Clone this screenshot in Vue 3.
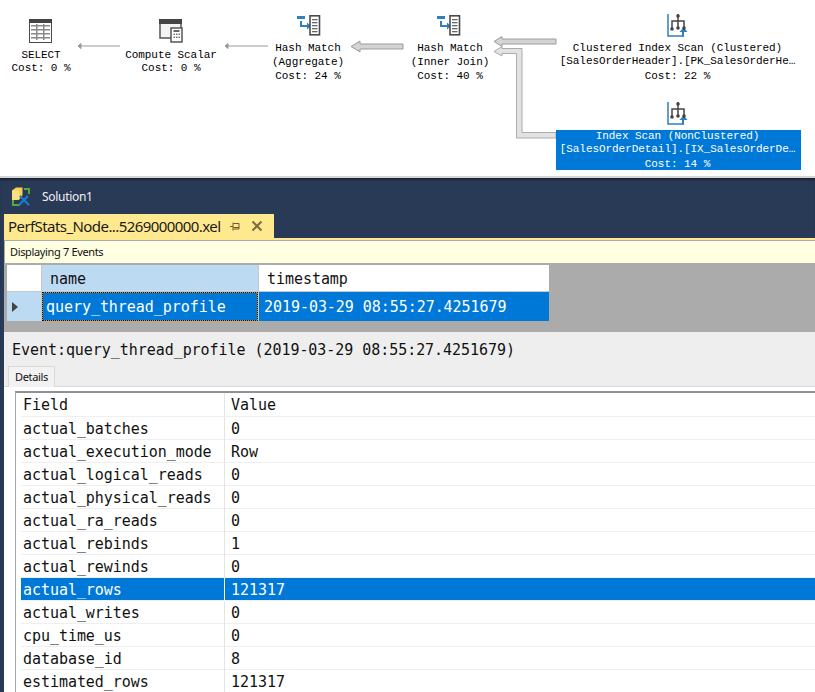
<script setup>
const nodes = [
  { id: 'select', x: 1, y: 49, w: 80, lines: ['SELECT', 'Cost: 0 %'], gaps: [13] },
  { id: 'compute', x: 111, y: 49, w: 120, lines: ['Compute Scalar', 'Cost: 0 %'], gaps: [13] },
  { id: 'agg', x: 258, y: 42, w: 100, lines: ['Hash Match', '(Aggregate)', 'Cost: 24 %'], gaps: [14, 14] },
  { id: 'join', x: 400, y: 42, w: 100, lines: ['Hash Match', '(Inner Join)', 'Cost: 40 %'], gaps: [14, 14] },
  { id: 'clustered', x: 555, y: 42, w: 245, lines: ['Clustered Index Scan (Clustered)', '[SalesOrderHeader].[PK_SalesOrderHe…', 'Cost: 22 %'], gaps: [13, 15] },
  { id: 'index', x: 556, y: 130, w: 245, sel: true, lines: ['Index Scan (NonClustered)', '[SalesOrderDetail].[IX_SalesOrderDe…', 'Cost: 14 %'], gaps: [13, 15] },
]
const rows = [
  ['actual_batches', '0'],
  ['actual_execution_mode', 'Row'],
  ['actual_logical_reads', '0'],
  ['actual_physical_reads', '0'],
  ['actual_ra_reads', '0'],
  ['actual_rebinds', '1'],
  ['actual_rewinds', '0'],
  ['actual_rows', '121317', true],
  ['actual_writes', '0'],
  ['cpu_time_us', '0'],
  ['database_id', '8'],
  ['estimated_rows', '121317'],
]
</script>

<template>
  <div class="page">
    <section class="plan">
      <svg class="links" width="815" height="176" viewBox="0 0 815 176">
        <g class="thin">
          <path d="M120 46H78" /><path d="M78 46l3-2.5v5z" />
          <path d="M268 46H225" /><path d="M225 46l3-2.5v5z" />
        </g>
        <path class="fat" d="M403 44H360V41L351 46.500L360 52V49H403Z" />
        <path class="fat" d="M556 39H502V36.500L494 41.500L502 46.500V44H556Z" />
        <path class="fat pale" d="M556 132.500H522V48.500H502V46.500L494 51.500L502 56V53.500H516.500V138H556Z" />

        <g transform="translate(29 19)">
          <rect x="0.500" y="0.500" width="22" height="23" fill="#fff" stroke="#4a4a4a" />
          <rect x="0" y="0" width="23" height="4" fill="#444" />
          <g fill="#8a8a8a">
            <rect x="2" y="6" width="19" height="1.500" /><rect x="2" y="10" width="19" height="1.500" />
            <rect x="2" y="14" width="19" height="1.500" /><rect x="2" y="18" width="19" height="1.500" />
            <rect x="7" y="5" width="1.500" height="16" /><rect x="14" y="5" width="1.500" height="16" />
          </g>
        </g>

        <g transform="translate(159 19)">
          <rect x="1" y="1" width="21" height="18" fill="#f4f4f4" stroke="#555" stroke-width="1.500" />
          <rect x="0" y="0" width="23" height="5" fill="#444" />
          <rect x="12" y="9" width="11" height="14" fill="#fff" stroke="#555" stroke-width="1.500" />
          <rect x="14.500" y="11" width="6" height="2" fill="#666" />
          <g fill="#777">
            <rect x="14.500" y="14.500" width="1.500" height="1.500" /><rect x="17" y="14.500" width="1.500" height="1.500" /><rect x="19.500" y="14.500" width="1.500" height="1.500" />
            <rect x="14.500" y="17.500" width="1.500" height="1.500" /><rect x="17" y="17.500" width="1.500" height="1.500" /><rect x="19.500" y="17.500" width="1.500" height="1.500" />
          </g>
        </g>

        <g v-for="x in [297, 437]" :key="x" :transform="`translate(${x} 15)`">
          <rect x="0" y="1" width="8" height="3" fill="#2f7fc4" />
          <path d="M4 6V11H11" fill="none" stroke="#2f7fc4" stroke-width="2" />
          <path d="M10 7.500L14 11L10 14.500Z" fill="#2f7fc4" />
          <rect x="13" y="0.800" width="9.500" height="19" fill="#fff" stroke="#4a4a4a" stroke-width="1.600" />
          <g fill="#666">
            <rect x="15" y="4" width="5.500" height="1.300" /><rect x="15" y="7" width="5.500" height="1.300" />
            <rect x="15" y="10" width="5.500" height="1.300" /><rect x="15" y="13" width="5.500" height="1.300" />
            <rect x="15" y="16" width="5.500" height="1.300" />
          </g>
        </g>

        <g v-for="y in [13, 101]" :key="y" :transform="`translate(667 ${y})`">
          <path d="M1 1V23H16M16 23H17" fill="none" stroke="#2f7fc4" stroke-width="1.500" />
          <path d="M16 23.500V18" fill="none" stroke="#2f7fc4" stroke-width="2" />
          <path d="M12.500 19L16.500 14.500L20.500 19Z" fill="#2f7fc4" />
          <path d="M11 1V10M5 17V8H17V17M11 8V15" fill="none" stroke="#444" stroke-width="1.500" />
          <circle cx="11" cy="3" r="1.800" fill="#444" /><circle cx="5" cy="16" r="1.800" fill="#444" />
          <circle cx="11" cy="15" r="1.800" fill="#444" /><circle cx="17" cy="15" r="1.800" fill="#444" />
        </g>
      </svg>

      <div
        v-for="n in nodes"
        :key="n.id"
        class="node"
        :class="{ selected: n.sel }"
        :style="{ left: n.x + 'px', top: n.y + 'px', width: n.w + 'px' }"
      >
        <div v-for="(l, i) in n.lines" :key="i" class="node-line" :style="{ height: (n.gaps[i] ?? 13) + 'px' }">{{ l }}</div>
      </div>
    </section>

    <section class="ide">
      <div class="titlebar">
        <svg width="20" height="20" viewBox="0 0 20 20">
          <path d="M1 6H3V17H9V19H1ZM13 1H19V7H17V3H13Z" fill="#5aa63c" />
          <path d="M1 3.500L5 0.500H11.500V8L8 13H3L1 11Z" fill="#f7cf58" />
          <path d="M1 3.500H8V12L3 13H1Z" fill="#fbe182" />
          <path d="M8 18L17 9M9 9L18 18" stroke="#1c7ad0" stroke-width="2.200" fill="none" />
        </svg>
        <span class="solution">Solution1</span>
      </div>

      <div class="tabstrip">
        <div class="doc-tab">
          <span class="doc-name">PerfStats_Node...5269000000.xel</span>
          <svg class="pin" width="10" height="9" viewBox="0 0 10 9">
            <path d="M0 4.500H3M3 0.500V8.500M3.500 1.500H9V7H3.500M3.500 5.500H9" fill="none" stroke="#6e5a2c" />
          </svg>
          <svg class="close" width="12" height="12" viewBox="0 0 12 12">
            <path d="M1.500 1.500L10.500 10.500M10.500 1.500L1.500 10.500" stroke="#7d6c40" stroke-width="2" />
          </svg>
        </div>
      </div>

      <div class="doc">
        <div class="info">Displaying 7 Events</div>

        <div class="events">
          <div class="events-grid">
            <div class="corner"></div>
            <div class="col col-active">name</div>
            <div class="col">timestamp</div>
            <div class="row-head"><i class="caret"></i></div>
            <div class="cell cell-focus">query_thread_profile</div>
            <div class="cell cell-time">2019-03-29 08:55:27.4251679</div>
          </div>
        </div>

        <div class="detail">
          <div class="event-title">Event:query_thread_profile (2019-03-29 08:55:27.4251679)</div>
          <div class="tabs">
            <div class="details-tab">Details</div>
          </div>
          <div class="panel">
            <div class="fields">
              <div class="field-row field-head">
                <div class="k">Field</div>
                <div class="v">Value</div>
              </div>
              <div v-for="r in rows" :key="r[0]" class="field-row" :class="{ active: r[2] }">
                <div class="k">{{ r[0] }}</div>
                <div class="v">{{ r[1] }}</div>
              </div>
            </div>
          </div>
        </div>
      </div>
    </section>
  </div>
</template>

<style scoped>
.page {
  width: 815px;
  height: 692px;
  overflow: hidden;
  display: flex;
  flex-direction: column;
  background: #fff;
}
.plan {
  position: relative;
  height: 176px;
  flex: none;
  background: #fff;
  font-family: "Liberation Mono", monospace;
  font-size: 11px;
  letter-spacing: -0.060px;
  color: #000;
}
.links {
  position: absolute;
  left: 0;
  top: 0;
}
.thin path {
  fill: #999;
  stroke: #999;
  stroke-width: 1;
}
.fat {
  fill: #d4d4d4;
  stroke: #9b9b9b;
  stroke-width: 1;
}
.pale {
  fill: #e2e2e2;
  stroke: #ababab;
}
.node {
  position: absolute;
  text-align: center;
  white-space: nowrap;
}
.node-line {
  line-height: 13px;
}
.selected {
  box-sizing: border-box;
  padding-right: 2px;
  background: #0078d7;
  color: #fff;
  height: 40px;
}
.ide {
  flex: 1;
  min-height: 0;
  display: flex;
  flex-direction: column;
  background: #293a56;
  box-shadow: inset 0 3px 2px -1px #1b2434;
  border-top: 2px solid #d6d6d6;
}
.titlebar {
  height: 36px;
  flex: none;
  display: flex;
  align-items: center;
  padding: 1px 0 0 11px;
  box-sizing: border-box;
  gap: 11px;
}
.solution {
  font-family: "Noto Sans", sans-serif;
  font-size: 12px;
  letter-spacing: -0.300px;
  color: #f1f1f1;
}
.tabstrip {
  height: 26px;
  flex: none;
  padding-left: 4px;
  display: flex;
}
.doc-tab {
  width: 270px;
  height: 24px;
  box-sizing: border-box;
  background: #ffe98e;
  display: flex;
  align-items: center;
  padding-left: 4px;
  color: #1b1b1b;
}
.doc-name {
  font-family: "Noto Sans", sans-serif;
  font-size: 15px;
  letter-spacing: -0.570px;
  width: 222px;
  white-space: nowrap;
}
.close {
  margin-left: 11px;
}
.doc {
  flex: 1;
  min-height: 0;
  margin-left: 4px;
  margin-top: -2px;
  display: flex;
  flex-direction: column;
  border-top: 2px solid #ffe98e;
  background: #eee;
}
.info {
  height: 23px;
  flex: none;
  box-sizing: border-box;
  padding-left: 5px;
  border-top: 1px solid #a9a9b4;
  border-left: 1px solid #a9a9b4;
  background: #ffffe1;
  font-family: "Noto Sans", sans-serif;
  font-size: 11px;
  line-height: 22px;
  letter-spacing: -0.350px;
  color: #111;
}
.events {
  height: 69px;
  flex: none;
  background: #ababab;
  padding: 2px 0 0 3px;
  box-sizing: border-box;
  font-family: "DejaVu Sans Mono", monospace;
  font-size: 15px;
  letter-spacing: -0.050px;
}
.events-grid {
  display: grid;
  grid-template-columns: 34px 216px 290px;
  grid-template-rows: 26px 29px;
  gap: 1px 1px;
  width: 542px;
  background: #c8c8c8;
}
.corner {
  background: #fff;
}
.col {
  background: #fff;
  padding: 1px 0 0 8px;
  line-height: 26px;
  height: 26px;
  box-sizing: border-box;
  color: #111;
}
.col-active {
  background: #bcdaf2;
}
.row-head {
  background: #bcdaf2;
  display: flex;
  align-items: center;
  padding-left: 5px;
}
.caret {
  width: 0;
  height: 0;
  border-left: 6px solid #444;
  border-top: 5px solid transparent;
  border-bottom: 5px solid transparent;
}
.cell {
  background: #0078d7;
  color: #fff;
  padding: 1px 0 0 4px;
  line-height: 28px;
  white-space: nowrap;
  box-sizing: border-box;
}
.cell-time {
  padding-left: 5px;
}
.cell-focus {
  box-shadow: inset 0 0 0 1px #e28b1e;
  outline: 1px dotted #111;
  outline-offset: -1px;
}
.detail {
  flex: 1;
  min-height: 0;
  display: flex;
  flex-direction: column;
  font-family: "DejaVu Sans Mono", monospace;
  font-size: 15px;
  letter-spacing: -0.050px;
}
.event-title {
  height: 34px;
  flex: none;
  box-sizing: border-box;
  padding: 8px 0 0 8px;
  line-height: 20px;
  color: #111;
}
.tabs {
  height: 20px;
  flex: none;
  padding-left: 4px;
  border-bottom: 1px solid #d9d9d9;
}
.details-tab {
  width: 47px;
  height: 21px;
  box-sizing: border-box;
  border: 1px solid #d9d9d9;
  border-bottom: none;
  background: #f2f2f2;
  font-family: "Noto Sans", sans-serif;
  font-size: 11px;
  line-height: 20px;
  letter-spacing: -0.350px;
  text-align: center;
  color: #111;
}
.panel {
  flex: 1;
  min-height: 0;
  padding: 4px 0 0 11px;
  background: #fff;
  overflow: hidden;
}
.fields {
  border-top: 2px solid #8f8f97;
  border-left: 1px solid #a8a8a8;
  padding-left: 5px;
}
.field-row {
  display: grid;
  grid-template-columns: 204px 1fr;
  height: 23px;
  line-height: 22px;
  box-sizing: border-box;
  border-bottom: 1px solid #efefef;
  color: #111;
}
.field-head {
  height: 24px;
  line-height: 22px;
}
.k {
  padding: 1px 0 0 2px;
  border-right: 1px solid #e4e4e4;
}
.v {
  padding: 1px 0 0 6px;
}
.active {
  background: #0078d7;
  color: #fff;
}
.active .k {
  border-right-color: #fff;
}
</style>
